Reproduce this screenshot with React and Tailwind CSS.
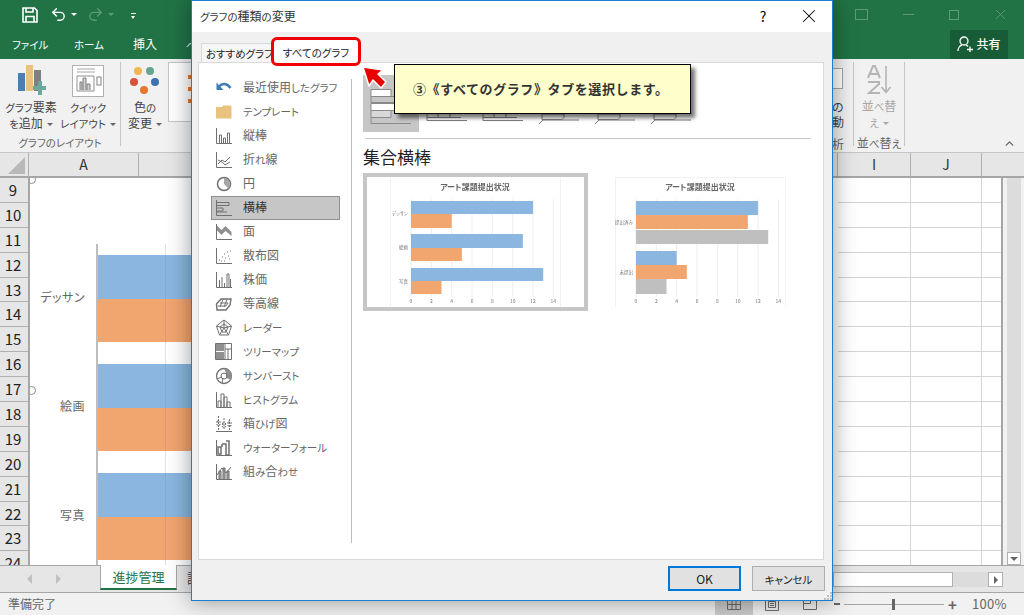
import { Undo2, Redo2, X, ChevronUp } from 'lucide-react';

const ROWS = [9, 10, 11, 12, 13, 14, 15, 16, 17, 18, 19, 20, 21, 22, 23, 24];

const CHART_GROUPS = [
  { label: 'デッサン' },
  { label: '絵画' },
  { label: '写真' },
];

// Kana in the reference's UI font is much narrower than the kanji, so set it smaller.
function J({ children }) {
  return children.split(/([\u3040-\u30ff]+)/).map((part, i) =>
    i % 2 ? <span key={i} className="text-[0.875em]">{part}</span> : part
  );
}

// ── Small icons for the chart type list ──────────────────────────────────────

const S = { fill: 'none', stroke: '#707070', strokeWidth: 1 };

function Axis() {
  return <path d="M1.5 1v15.5H17" {...S} />;
}

const TYPE_ICONS = {
  recent: (
    <>
      <path d="M4 7.5c3-3.5 8-3.5 11.5 1.5" fill="none" stroke="#3f7cb5" strokeWidth="2.6" />
      <path d="M1.5 3.5v7.5h7z" fill="#3f7cb5" />
    </>
  ),
  template: <path d="M1 4h6l1-1.500h7.500q1 0 1 1V15.500H1z" fill="#e9c27e" />,
  column: (
    <>
      <Axis />
      <path d="M4.500 16V8h2v8M8.500 16v-5h2v5M12.500 16V6h2v10" {...S} />
    </>
  ),
  line: (
    <>
      <Axis />
      <path d="M3 13l4-4 3 2 5-5M3 9l4 2 3 3 5-3" {...S} />
    </>
  ),
  pie: (
    <>
      <circle cx="9" cy="9" r="6.500" {...S} strokeWidth="1.500" />
      <path d="M9 3v6l4.500 4.500A6.500 6.500 0 0 0 9 3z" fill="#a6a6a6" />
    </>
  ),
  bar: (
    <>
      <Axis />
      <path d="M2 3.500h12v3H2M2 9h6v3H2M2 13h10" {...S} />
    </>
  ),
  area: (
    <>
      <path d="M1.500 2l5 5 4-4 6 6v4l-6-5-4 4-5-5z" fill="#8f8f8f" />
      <Axis />
    </>
  ),
  scatter: (
    <>
      <Axis />
      <path d="M4 13h1M7 10h1M6 14h1M9 7h1M10 11h1M12 5h1M13 9h1M9 14h1M14 12h1M15 4h1" {...S} strokeDasharray="1 1" />
    </>
  ),
  stock: (
    <>
      <Axis />
      <path d="M4.500 16V9M7 16V6M9.500 16v-4M12 16V3h2v13M15.500 16V8" {...S} />
    </>
  ),
  surface: (
    <>
      <path d="M1.500 9L6 4h10l-1 6-4 5H2z" {...S} strokeWidth="1.400" />
      <path d="M5 8h8l-2 3H3M8 4.500L5 12M12 4.500L9 12" {...S} />
    </>
  ),
  radar: (
    <>
      <path d="M9 1l7.500 6-3 9h-9l-3-9z" {...S} />
      <path d="M9 1v8M1.500 7L9 9l7.500-2M4.500 16L9 9l4.500 7M9 5l4 3-2 5H7L5 8z" {...S} />
    </>
  ),
  treemap: (
    <>
      <path d="M1 1h8v7H1zM1 9h8v8H1z" fill="#8f8f8f" />
      <path d="M.500.500h16v16H.500zM10 .500V17M10 6h7M13 6v11" {...S} />
    </>
  ),
  sunburst: (
    <>
      <circle cx="9" cy="9" r="7.500" {...S} strokeWidth="1.300" />
      <path d="M9 1.500A7.500 7.500 0 0 1 15.500 13L11 10.500V6z" fill="#8f8f8f" />
      <path d="M2 12l5-2M7 16l1-5" {...S} />
      <circle cx="9" cy="9" r="3" {...S} />
    </>
  ),
  histogram: (
    <>
      <Axis />
      <path d="M3 16v-6h3v6M6 16V3h3v13M9 16V6h3v10M12 16v-5h3v5" {...S} />
    </>
  ),
  box: (
    <>
      <path d="M1 16.500h16" {...S} />
      <path d="M3.500 1v14M9 3v12M14.500 4v11M2 6h3v4H2zM7.500 8h3v4h-3zM13 7h3v4h-3z" {...S} strokeDasharray="2 1" />
    </>
  ),
  waterfall: (
    <>
      <Axis />
      <path d="M3 15V8h3v7zM7 8V5M11 2h3v14h-3V5H7" {...S} strokeWidth="1.500" />
    </>
  ),
  combo: (
    <>
      <Axis />
      <path d="M4 16V8h2v8M8 16V5h2v11M12 16V8h2v8" fill="#a6a6a6" stroke="#707070" />
      <path d="M2 12l5-7 4 5 5-6" {...S} />
    </>
  ),
};

const CHART_TYPES = [
  ['recent', '最近使用したグラフ'],
  ['template', 'テンプレート'],
  ['column', '縦棒'],
  ['line', '折れ線'],
  ['pie', '円'],
  ['bar', '横棒'],
  ['area', '面'],
  ['scatter', '散布図'],
  ['stock', '株価'],
  ['surface', '等高線'],
  ['radar', 'レーダー'],
  ['treemap', 'ツリーマップ'],
  ['sunburst', 'サンバースト'],
  ['histogram', 'ヒストグラム'],
  ['box', '箱ひげ図'],
  ['waterfall', 'ウォーターフォール'],
  ['combo', '組み合わせ'],
];

// ── Ribbon ───────────────────────────────────────────────────────────────────

function Caret({ className = 'border-t-[#666]' }) {
  return (
    <span className={`inline-block ml-1 align-middle w-0 h-0 border-x-[3px] border-x-transparent border-t-[3px] ${className}`} />
  );
}

function RibbonButton({ width, icon, lines }) {
  return (
    <div className={`${width} flex flex-col items-center shrink-0`}>
      <div className="h-[37px] flex items-center shrink-0">{icon}</div>
      <div className="text-[12px] leading-[15px] text-[#444] text-center whitespace-nowrap">
        <div><J>{lines[0]}</J></div>
        <div><J>{lines[1]}</J><Caret /></div>
      </div>
    </div>
  );
}

function AddElementIcon() {
  return (
    <svg width="32" height="34" viewBox="0 0 32 34" className="shrink-0">
      <rect x="3" y="9" width="7" height="18" fill="#4a7fb5" />
      <rect x="11" y="1" width="7" height="26" fill="#e9c27e" />
      <rect x="19" y="6" width="7" height="21" fill="#7f7f7f" />
      <path d="M20 21h5v-5h4v5h4v4h-4v5h-4v-5h-5z" transform="translate(-2 1)" fill="#6fa89a" />
    </svg>
  );
}

function QuickLayoutIcon() {
  return (
    <svg width="32" height="32" viewBox="0 0 32 32" className="shrink-0">
      <rect x=".5" y=".5" width="31" height="31" fill="#fff" stroke="#b0b0b0" />
      <path d="M5 4h18M5 7h18" stroke="#a6a6a6" />
      <path d="M5 11h17v15H5z" fill="none" stroke="#8f8f8f" />
      <path d="M8 25v-8h2v8M11 25V13h3v12M15 25v-6h3v6" fill="#d0d0d0" stroke="#7f7f7f" />
      <rect x="25" y="12" width="4" height="8" fill="none" stroke="#7f7f7f" />
    </svg>
  );
}

function ColorsIcon() {
  return (
    <svg width="30" height="30" viewBox="0 0 30 30" className="shrink-0">
      <circle cx="8" cy="5" r="4" fill="#f0b64f" />
      <circle cx="20" cy="5" r="4" fill="#64a491" />
      <circle cx="4" cy="16" r="4" fill="#d8513a" />
      <circle cx="25" cy="16" r="4" fill="#3e72ae" />
      <circle cx="14" cy="24" r="4" fill="#e8782b" />
    </svg>
  );
}

function Ribbon() {
  return (
    <div className="h-[94px] bg-[#f1f1f1] border-b border-[#c6c6c6] flex pt-[3px] shrink-0">
      <div className="w-[121px] h-[84px] border-r border-[#c6c6c6] flex flex-col shrink-0">
        <div className="flex h-[72px] pl-[1px] shrink-0">
          <RibbonButton width="w-[60px]" icon={<AddElementIcon />} lines={['グラフ要素', 'を追加']} />
          <RibbonButton width="w-[54px]" icon={<QuickLayoutIcon />} lines={['クイック', 'レイアウト']} />
        </div>
        <div className="text-[12px] leading-[15px] text-center text-[#666] shrink-0"><J>グラフのレイアウト</J></div>
      </div>
      <RibbonButton width="w-[46px] ml-[1px]" icon={<ColorsIcon />} lines={['色の', '変更']} />
      <div className="w-[60px] h-[60px] bg-white border border-[#c6c6c6] flex flex-col gap-2 pl-[19px] pt-3 shrink-0">
        <span className="w-[6px] h-[4px] bg-[#e8782b]" />
        <span className="w-[6px] h-[4px] bg-[#e8782b]" />
        <span className="w-[6px] h-[4px] bg-[#e8782b]" />
      </div>
      <div className="flex-1" />
      {/* what is left of the group that the dialog hides */}
      <div className="w-[22px] h-[84px] border-r border-[#c6c6c6] text-[12px] leading-[15px] text-[#444] shrink-0">
        <div className="w-[11px] h-[21px] mt-[6px] border border-l-0 border-[#a6a6a6] bg-white" />
        <div className="mt-[10px]">の</div>
        <div>動</div>
        <div className="mt-[7px] text-[#666]">析</div>
      </div>
      <div className="w-[51px] h-[84px] border-r border-[#c6c6c6] flex flex-col items-center shrink-0">
        <svg width="26" height="30" viewBox="0 0 26 30" className="mt-[3px] shrink-0">
          <path d="M2 13L7 1h2l5 12M4 9h8M2 17h11v2L3 28h11" fill="none" stroke="#b5b5b5" strokeWidth="2" />
          <path d="M20 1v26M15.500 22l4.500 5.500 4.500-5.500" fill="none" stroke="#b5b5b5" strokeWidth="1.600" />
        </svg>
        <div className="text-[12px] leading-[15px] text-[#a6a6a6] text-center mt-[3px] shrink-0"><J>並べ替</J></div>
        <div className="text-[12px] leading-[15px] text-[#a6a6a6] text-center shrink-0"><J>え</J><Caret className="border-t-[#a6a6a6]" /></div>
        <div className="text-[12px] leading-[15px] mt-[5px] text-[#666] whitespace-nowrap shrink-0"><J>並べ替え</J></div>
      </div>
      <div className="w-[119px] relative shrink-0">
        <ChevronUp size={13} strokeWidth={2.5} className="absolute right-[8px] top-[75px] text-[#666]" />
      </div>
    </div>
  );
}

// ── Sheet behind the dialog ──────────────────────────────────────────────────

function ColumnHeaders() {
  return (
    <div className="h-[25px] flex bg-[#e6e6e6] border-b-[2px] border-[#a6a6a6] text-[14px] leading-[23px] text-[#333] shrink-0">
      <div className="w-[29px] border-r border-[#b0b0b0] relative shrink-0">
        <span className="absolute right-[3px] bottom-[2px] w-0 h-0 border-l-[17px] border-l-transparent border-b-[17px] border-b-[#b9b9b9]" />
      </div>
      <div className="w-[110px] text-center border-r border-[#b0b0b0] shrink-0">A</div>
      <div className="w-[699px] shrink-0 border-r border-[#b0b0b0]" />
      <div className="w-[73px] text-center border-r border-[#b0b0b0] shrink-0">I</div>
      <div className="w-[71px] text-center border-r border-[#b0b0b0] shrink-0">J</div>
      <div className="flex-1" />
    </div>
  );
}

function RowHeaders() {
  return (
    <div className="w-[30px] bg-[#e6e6e6] border-r-[2px] border-[#a6a6a6] overflow-hidden shrink-0">
      {ROWS.map((row) => (
        <div key={row} className="h-[24.900px] border-b border-[#b0b0b0] text-center text-[15px] leading-[24px] text-[#222] pr-[2px]">
          {row}
        </div>
      ))}
    </div>
  );
}

function SheetChart() {
  return (
    <div className="w-[808px] relative flex pt-[66px] shrink-0 overflow-hidden">
      <div className="w-[66px] flex flex-col pt-[11px] gap-[22px] shrink-0">
        {CHART_GROUPS.map((g) => (
          <div key={g.label} className="h-[87px] flex items-center justify-end pr-[11px] pb-[4px] text-[12px] text-[#666] tracking-[0.500px] whitespace-nowrap">
            {g.label}
          </div>
        ))}
      </div>
      <div className="flex-1 border-l-[2px] border-[#bdbdbd] flex flex-col pt-[11px] gap-[22px]">
        {CHART_GROUPS.map((g) => (
          <div key={g.label} className="w-[300px] h-[87px] flex flex-col">
            <div className="h-[44px] bg-[#8ab6e0]" />
            <div className="h-[43px] bg-[#f1a56f]" />
          </div>
        ))}
      </div>
      <span className="absolute left-[135px] top-[66px] bottom-0 w-px bg-[#8a8a8a]/25" />
      <span className="absolute left-[-3px] top-[-3px] w-[9px] h-[9px] rounded-full bg-white border border-[#8a8a8a]" />
      <span className="absolute left-[-3px] top-[208px] w-[9px] h-[9px] rounded-full bg-white border border-[#8a8a8a]" />
    </div>
  );
}

function CellGrid() {
  return (
    <div className="flex-1 bg-white border-r-[2px] border-[#a6a6a6] overflow-hidden">
      {ROWS.map((row) => (
        <div key={row} className="h-[24.900px] flex border-b border-[#d4d4d4]">
          <div className="w-[73px] border-r border-[#d4d4d4] shrink-0" />
          <div className="w-[71px] border-r border-[#d4d4d4] shrink-0" />
        </div>
      ))}
    </div>
  );
}

function VerticalScrollbar() {
  return (
    <div className="w-[21px] bg-[#f1f1f1] pl-[4px] pr-[3px] flex flex-col shrink-0 -mt-[23px] relative">
      <div className="h-[15px] bg-white border border-[#b0b0b0] flex items-center justify-center shrink-0">
        <span className="w-0 h-0 border-x-[4px] border-x-transparent border-b-[4px] border-b-[#666]" />
      </div>
      <div className="flex-1 bg-[#dcdcdc]" />
      <div className="h-[13px] bg-white border border-[#b0b0b0] flex items-center justify-center shrink-0">
        <span className="w-0 h-0 border-x-[4px] border-x-transparent border-t-[4px] border-t-[#666]" />
      </div>
    </div>
  );
}

function SheetTabs() {
  return (
    <div className="h-[28px] bg-[#e6e6e6] border-y border-[#a6a6a6] flex shrink-0 relative">
      <div className="w-[100px] flex items-center gap-[24px] pl-[27px] shrink-0">
        <span className="w-0 h-0 border-y-[5px] border-y-transparent border-r-[5px] border-r-[#c0c0c0]" />
        <span className="w-0 h-0 border-y-[5px] border-y-transparent border-l-[5px] border-l-[#c0c0c0]" />
      </div>
      <div className="w-[77px] h-[25px] -mt-px bg-white border-x border-[#a6a6a6] border-b-[2px] border-b-[#217346] text-[13px] leading-[24px] text-[#217346] text-center shrink-0">
        進捗管理
      </div>
      <span className="ml-[10px] text-[13px] leading-[23px] text-[#444] whitespace-nowrap">課題</span>
      <div className="flex-1" />
      <div className="w-[120px] h-[15px] mt-[6px] bg-white border border-[#b0b0b0] shrink-0" />
      <div className="w-[35px] h-[15px] mt-[6px] bg-[#dcdcdc] shrink-0" />
      <div className="w-[15px] h-[15px] mt-[6px] bg-white border border-[#b0b0b0] flex items-center justify-center shrink-0">
        <span className="w-0 h-0 border-y-[4px] border-y-transparent border-l-[4px] border-l-[#666]" />
      </div>
      <div className="w-[21px] shrink-0" />
    </div>
  );
}

function StatusBar() {
  return (
    <div className="h-[22px] bg-[#f1f1f1] flex items-center text-[12px] text-[#666] shrink-0">
      <span className="pl-[8px] flex-1">準備完了</span>
      <div className="w-[38px] h-full bg-[#c9c9c9] flex items-center justify-center shrink-0">
        <svg width="14" height="11" viewBox="0 0 14 11"><path d="M.5.5h13v10H.5zM5 .5v10M9 .5v10M.5 5.500h13" fill="none" stroke="#6b6b6b" /></svg>
      </div>
      <div className="w-[38px] flex justify-center shrink-0">
        <svg width="14" height="13" viewBox="0 0 14 13"><path d="M.5.500h13v12H.5zM3.500 3.500h7v6h-7zM5 5.500h4M5 7.500h4" fill="none" stroke="#6b6b6b" /></svg>
      </div>
      <div className="w-[38px] flex justify-center shrink-0">
        <svg width="14" height="12" viewBox="0 0 14 12"><path d="M.5.500h13v11H.5zM7.500.500v5H.5" fill="none" stroke="#6b6b6b" /></svg>
      </div>
      <span className="w-[6px] h-[2px] bg-[#666] ml-[5px] shrink-0" />
      <div className="w-[100px] h-px bg-[#a6a6a6] mx-[4px] relative shrink-0">
        <span className="absolute left-[48px] top-[-5px] w-[3px] h-[11px] bg-[#666]" />
      </div>
      <span className="w-[8px] text-center text-[15px] font-bold leading-none shrink-0">+</span>
      <span className="ml-[16px] mr-[20px] w-[32px] text-[13px] tracking-[0.300px] whitespace-nowrap shrink-0">100%</span>
    </div>
  );
}

// ── Dialog ───────────────────────────────────────────────────────────────────

function SubtypeIcon({ selected, tilted }) {
  return (
    <div className={`w-[56px] h-[57px] flex items-end justify-center pb-[5px] shrink-0 ${selected ? 'bg-[#c6c6c6]' : ''}`}>
      {selected ? (
        <svg width="42" height="38" viewBox="0 0 42 38">
          <path d="M1 .5h20v7H1z" fill="#fff" stroke="#8a8a8a" />
          <path d="M1 7.500h34v6H1z" fill="#c6c6c6" stroke="#8a8a8a" />
          <path d="M1 14.500h34v7H1z" fill="#fff" stroke="#8a8a8a" />
          <path d="M1 21.500h20v7H1z" fill="#d8d8d8" stroke="#8a8a8a" />
          <path d="M1 28.500v6h40" fill="none" stroke="#8a8a8a" />
        </svg>
      ) : (
        <svg width="42" height="12" viewBox="0 0 42 12" className="mb-[2px]">
          {tilted ? (
            <path d="M1 11l4-4h36M4 6.500h20l2-2V1H4z" fill="none" stroke="#7f7f7f" />
          ) : (
            <path d="M1 1v6.500h40M1 4.500h34M12 .5v4M24 .5v4" fill="none" stroke="#7f7f7f" />
          )}
        </svg>
      )}
    </div>
  );
}

function ThumbBars({ groups, labels, ticksY }) {
  const axis = groups[0].x;
  const unit = 10.170;
  return (
    <>
      {[0, 2, 4, 6, 8, 10, 12, 14].map((t) => (
        <g key={t}>
          <path d={`M${axis + t * unit} ${ticksY - 104}V${ticksY - 6}`} stroke="#eeeeee" />
          <text x={axis + t * unit} y={ticksY} fontSize="5" fill="#777" textAnchor="middle">{t}</text>
        </g>
      ))}
      {groups.map((b, i) => (
        <rect key={i} x={axis} y={b.y} width={b.len * unit} height={b.h} fill={b.color} />
      ))}
      {labels.map((l) => (
        <text key={l.text} x={axis - 3} y={l.y} fontSize="4.500" fill="#777" textAnchor="end">{l.text}</text>
      ))}
    </>
  );
}

const BLUE = '#8ab6e0';
const ORANGE = '#f1a56f';
const GRAY = '#bfbfbf';

function ThumbOne() {
  const x = 411;
  const groups = [
    { x, y: 201, h: 13, len: 12, color: BLUE },
    { x, y: 214, h: 14, len: 4, color: ORANGE },
    { x, y: 234, h: 14, len: 11, color: BLUE },
    { x, y: 248, h: 13, len: 5, color: ORANGE },
    { x, y: 268, h: 13, len: 13, color: BLUE },
    { x, y: 281, h: 13, len: 3, color: ORANGE },
  ];
  return (
    <svg width="225" height="138" viewBox="363 173 225 138" className="shrink-0 blur-[0.400px]">
      <rect x="365" y="175" width="221" height="134" fill="#fff" stroke="#c6c6c6" strokeWidth="4" />
      <path d="M390.500 177V307M560.500 177V307" stroke="#f1f1f1" />
      <text x="475" y="190" fontSize="8" fontWeight="700" fill="#666" textAnchor="middle">アート課題提出状況</text>
      <ThumbBars
        groups={groups}
        ticksY={303}
        labels={[{ text: 'デッサン', y: 215 }, { text: '絵画', y: 249 }, { text: '写真', y: 283 }]}
      />
    </svg>
  );
}

function ThumbTwo() {
  const x = 636;
  const groups = [
    { x, y: 201, h: 14, len: 12, color: BLUE },
    { x, y: 215, h: 14, len: 11, color: ORANGE },
    { x, y: 230, h: 14, len: 13, color: GRAY },
    { x, y: 251, h: 14, len: 4, color: BLUE },
    { x, y: 265, h: 14, len: 5, color: ORANGE },
    { x, y: 279, h: 15, len: 3, color: GRAY },
  ];
  return (
    <svg width="172" height="131" viewBox="615 177 172 131" className="shrink-0 mt-[4px] blur-[0.400px]">
      <path d="M615.500 307V177.500H785.500V307" fill="none" stroke="#f1f1f1" />
      <text x="700" y="190" fontSize="8" fontWeight="700" fill="#666" textAnchor="middle">アート課題提出状況</text>
      <ThumbBars
        groups={groups}
        ticksY={303}
        labels={[{ text: '提出済み', y: 224 }, { text: '未提出', y: 274 }]}
      />
    </svg>
  );
}

function Dialog() {
  return (
    <div className="absolute left-[191px] top-0 w-[642px] h-[601px] bg-[#f0f0f0] border border-[#1a7fd0] shadow-[0_0_22px_rgba(0,0,0,0.4)] flex flex-col">
      <div className="h-[31px] bg-white flex items-center pl-[8px] pb-[1px] text-[12px] text-[#333] shrink-0">
        <span className="flex-1"><J>グラフの種類の変更</J></span>
        <span className="w-[46px] text-center text-[14px] text-black">?</span>
        <div className="w-[46px] flex justify-center">
          <X size={22} strokeWidth={1.100} className="text-black" />
        </div>
      </div>

      <div className="h-[30px] flex items-end pl-[9px] shrink-0">
        <div className="w-[71px] h-[19px] bg-[#f6f6f6] border border-b-0 border-[#d9d9d9] pl-[4px] text-[12px] leading-[18px] text-[#222] whitespace-nowrap overflow-hidden">
          <J>おすすめグラフ</J>
        </div>
      </div>

      <div className="ml-[6px] mr-[8px] h-[498px] bg-white border border-[#d9d9d9] flex shrink-0">
        <div className="w-[152px] pl-[12px] pr-[11px] pt-[13px] shrink-0">
          {CHART_TYPES.map(([key, label]) => (
            <div
              key={key}
              className={`h-[24px] flex items-center pl-[3px] border text-[12px] whitespace-nowrap ${key === 'bar' ? 'bg-[#c6c6c6] border-[#8f8f8f] text-[#333]' : 'border-transparent text-[#666]'}`}
            >
              <svg width="18" height="18" viewBox="0 0 18 18" className="mr-[10px] shrink-0">
                {TYPE_ICONS[key]}
              </svg>
              <span className="-mt-[2px]"><J>{label}</J></span>
            </div>
          ))}
        </div>
        <div className="w-px my-[16px] bg-[#bdbdbd] shrink-0" />
        <div className="flex-1 pl-[11px] pr-[12px] pt-[12px] min-w-0">
          <div className="flex">
            <SubtypeIcon selected />
            <SubtypeIcon />
            <SubtypeIcon />
            <SubtypeIcon tilted />
            <SubtypeIcon tilted />
            <SubtypeIcon tilted />
          </div>
          <div className="h-px bg-[#c6c6c6] mt-[6px] ml-[2px]" />
          <div className="text-[17px] leading-[24px] text-[#222] mt-[6px]">集合横棒</div>
          <div className="flex gap-[27px] mt-[4px]">
            <ThumbOne />
            <ThumbTwo />
          </div>
        </div>
      </div>

      <div className="flex-1 flex justify-end gap-[11px] pr-[7px] pt-[6px] relative">
        <button className="w-[73px] h-[25px] bg-[#e1e1e1] border-[2px] border-[#0078d7] text-[12px] text-[#222]">OK</button>
        <button className="w-[73px] h-[25px] bg-[#e1e1e1] border border-[#adadad] text-[12px] text-[#222]"><J>キャンセル</J></button>
        <svg width="9" height="9" viewBox="0 0 9 9" className="absolute right-0 bottom-0">
          <path d="M7 1h2v2H7zM4 4h2v2H4zM7 4h2v2H7zM1 7h2v2H1zM4 7h2v2H4zM7 7h2v2H7z" fill="#bdbdbd" />
        </svg>
      </div>
    </div>
  );
}

function Annotations() {
  return (
    <>
      <div className="absolute left-[271px] top-[37px] w-[90px] h-[29px] bg-white border-[3px] border-[#f00000] rounded-[6px] text-[12px] leading-[24px] text-center text-[#222] whitespace-nowrap">
        <J>すべてのグラフ</J>
      </div>
      <svg width="28" height="26" viewBox="0 0 28 26" className="absolute left-[361px] top-[65px]">
        <path d="M2 2l20 3-5 4 8 8-5 6-8-8-4 6z" fill="#e80000" stroke="#fff" strokeWidth="1.500" strokeLinejoin="round" />
      </svg>
      <div className="absolute left-[394px] top-[64px] w-[297px] h-[50px] bg-[#ffffcc] border border-black shadow-[4px_4px_4px_rgba(0,0,0,0.55)] flex items-center pl-[18px] text-[13px] font-bold text-[#333] tracking-[0.600px] whitespace-nowrap [font-feature-settings:normal]">
        ③《すべてのグラフ》タブを選択します。
      </div>
    </>
  );
}

export default function App() {
  return (
    <div className="w-[1024px] h-[615px] relative overflow-hidden flex flex-col bg-white font-['Noto_Sans_CJK_JP','Noto_Sans',sans-serif] [font-feature-settings:'palt']">
      <div className="h-[59px] bg-[#217346] text-white shrink-0 flex flex-col">
        <div className="h-[29px] flex items-center relative shrink-0">
          <svg width="16" height="16" viewBox="0 0 16 16" className="ml-[22px] shrink-0">
            <path d="M1 1h11.500L15 3.500V15H1z" fill="none" stroke="#fff" strokeWidth="1.600" />
            <path d="M4 1v4h7V1M4 15V9.500h8V15" fill="none" stroke="#fff" strokeWidth="1.600" />
          </svg>
          <Undo2 size={17} strokeWidth={2} className="ml-[12px] shrink-0" />
          <Caret className="border-t-white" />
          <Redo2 size={17} strokeWidth={2} className="ml-[10px] text-[#5c9a78] shrink-0" />
          <Caret className="border-t-[#5c9a78]" />
          <span className="ml-[17px] w-[5px] h-[6px] border-t border-white shrink-0 flex items-start mt-[2px]">
            <span className="mt-[2px] w-0 h-0 border-x-[2.500px] border-x-transparent border-t-[3px] border-t-white" />
          </span>
          <div className="flex-1" />
          <div className="w-[13px] h-[11px] border border-[#5c9a78] mr-[35px] shrink-0" />
          <div className="w-[11px] h-px bg-[#5c9a78] mr-[35px] shrink-0" />
          <div className="w-[10px] h-[10px] border border-[#5c9a78] mr-[33px] shrink-0" />
          <X size={17} strokeWidth={1.200} className="text-[#5c9a78] mr-[15px] shrink-0" />
        </div>
        <div className="h-[30px] flex items-center text-[12px] shrink-0">
          <span className="ml-[12px] w-[34px] whitespace-nowrap"><J>ファイル</J></span>
          <span className="ml-[28px] w-[30px] whitespace-nowrap"><J>ホーム</J></span>
          <span className="ml-[29px]">挿入</span>
          <span className="ml-[29px]"><J>ペ</J></span>
          <div className="flex-1" />
          <div className="w-[58px] h-[29px] bg-[#185c37] mr-[16px] flex items-center justify-center gap-[3px]">
            <svg width="16" height="16" viewBox="0 0 16 16" className="shrink-0">
              <circle cx="7" cy="5" r="4" fill="none" stroke="#fff" strokeWidth="1.300" />
              <path d="M1 15c0-3 2-5.500 4-6M9 9.200c.8.300 1.500.700 2 1.300M10 13.500h6M13 10.500v5.500" fill="none" stroke="#fff" strokeWidth="1.300" />
            </svg>
            <span className="text-[12px] font-medium">共有</span>
          </div>
        </div>
      </div>

      <Ribbon />
      <ColumnHeaders />

      <div className="h-[387px] flex shrink-0 overflow-hidden">
        <RowHeaders />
        <SheetChart />
        <div className="w-[165px] flex shrink-0">
          <CellGrid />
        </div>
        <VerticalScrollbar />
      </div>

      <SheetTabs />
      <StatusBar />

      <Dialog />
      <Annotations />
    </div>
  );
}
